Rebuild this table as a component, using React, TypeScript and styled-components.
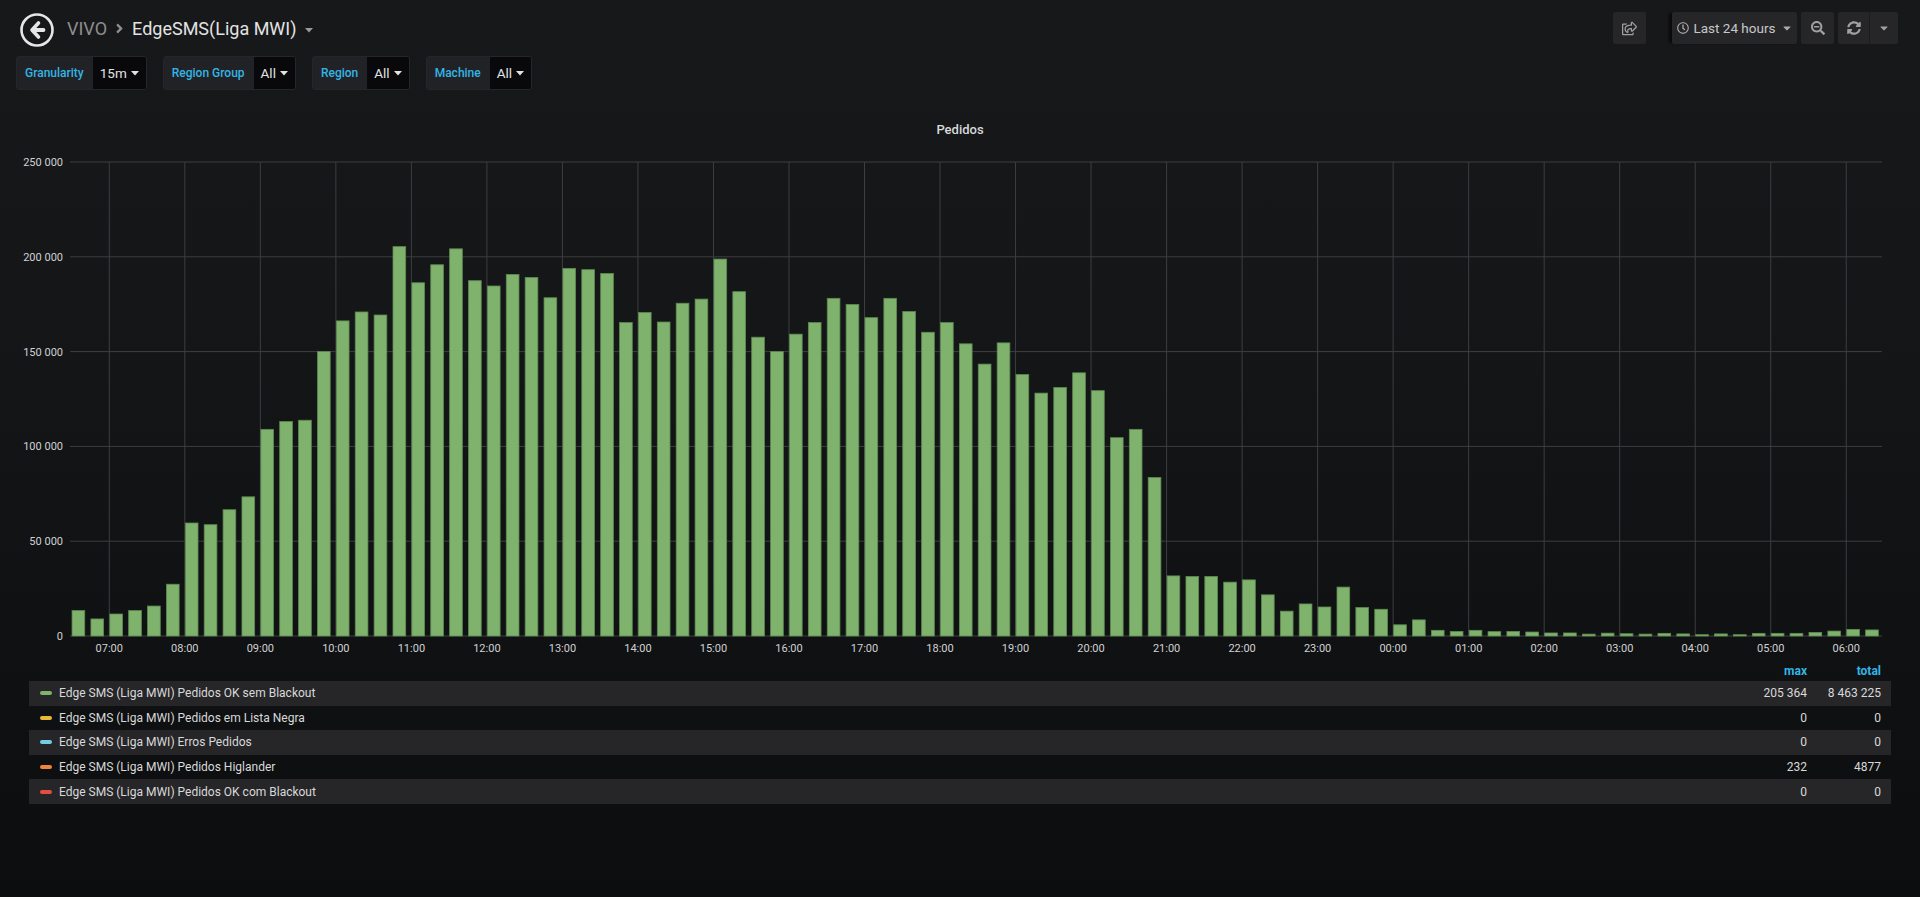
import React from "react";
import styled, { createGlobalStyle } from "styled-components";
import {
  FaRegShareSquare,
  FaRegClock,
  FaSearchMinus,
  FaSyncAlt,
  FaCaretDown,
  FaAngleRight,
} from "react-icons/fa";

const GlobalStyle = createGlobalStyle`
  html, body {
    margin: 0;
    padding: 0;
  }
  body {
    background: linear-gradient(180deg, #17181a 0%, #151618 35%, #0c0d0f 100%);
    min-height: 897px;
    font-family: Roboto, "Liberation Sans", Arial, sans-serif;
    color: #d8d9da;
  }
`;

const Page = styled.div`
  width: 1920px;
  height: 897px;
  overflow: hidden;
`;

const Navbar = styled.div`
  display: flex;
  align-items: center;
  height: 56px;
  padding: 0 22px 0 20px;
  box-sizing: border-box;
`;

const BackButton = styled.div`
  width: 34px;
  height: 34px;
  margin: 4px 13px 0 0;
  display: flex;
`;

const Crumb = styled.span`
  font-size: 18px;
  color: #8e8e8e;
`;

const Chevron = styled.span`
  display: flex;
  color: #8e8e8e;
  margin: 1px 5px 0 5px;
`;

const Title = styled.span`
  font-size: 18px;
  color: #e3e3e3;
`;

const TitleCaret = styled.span`
  display: flex;
  color: #9a9a9a;
  margin-left: 8px;
  margin-top: 4px;
`;

const Spacer = styled.div`
  flex: 1;
`;

const NavButtons = styled.div`
  display: flex;
  align-items: center;
  gap: 4px;
`;

interface BtnProps {
  $w: number;
}

const NavBtn = styled.div<BtnProps>`
  width: ${({ $w }) => $w}px;
  height: 32px;
  background: #262628;
  border-radius: 2px;
  display: flex;
  align-items: center;
  justify-content: center;
  color: #9fa0a1;
  font-size: 15px;
  box-sizing: border-box;
`;

const ShareBtn = styled(NavBtn)`
  margin-right: 22px;
`;

const TimeBtn = styled(NavBtn)`
  gap: 5px;
  color: #c7c8c9;
  font-size: 13.5px;
  box-shadow: -4px 0 3px -1px rgba(0, 0, 0, 0.6);
  & svg {
    color: #a9aaab;
  }
`;

const BtnGroup = styled.div`
  display: flex;
  background: #262628;
  border-radius: 2px;
`;

const GroupPart = styled.div<BtnProps>`
  width: ${({ $w }) => $w}px;
  height: 32px;
  display: flex;
  align-items: center;
  justify-content: center;
  color: #9fa0a1;
  font-size: 15px;
  & + & {
    border-left: 1px solid #1b1c1e;
  }
`;

const FilterRow = styled.div`
  display: flex;
  gap: 16px;
  padding-left: 16px;
`;

const Filter = styled.div`
  display: flex;
  height: 34px;
  border: 1px solid #252629;
  border-radius: 3px;
  overflow: hidden;
  box-sizing: border-box;
`;

const FilterLabel = styled.div`
  background: #212225;
  color: #33b5e5;
  font-size: 12px;
  font-weight: 500;
  padding: 0 9px 0 8px;
  display: flex;
  align-items: center;
`;

const FilterValue = styled.div`
  background: #09090b;
  color: #e3e3e3;
  font-size: 13.5px;
  padding: 0 7px 0 7px;
  display: flex;
  align-items: center;
  gap: 4px;
`;

const Panel = styled.div`
  margin-top: 29px;
  padding: 0 15px;
`;

const PanelTitle = styled.div`
  height: 22px;
  line-height: 22px;
  text-align: center;
  font-size: 13px;
  font-weight: 500;
  color: #d8d9da;
`;

const ChartSvg = styled.svg`
  display: block;
  margin-top: 10px;
  font-family: Roboto, "Liberation Sans", Arial, sans-serif;
`;

const Legend = styled.div`
  margin: 0 14px;
  font-size: 12px;
`;

const LegendHead = styled.div`
  display: flex;
  height: 20px;
  align-items: center;
  color: #33b5e5;
  font-weight: 700;
`;

interface RowProps {
  $odd: boolean;
}

const LegendRow = styled.div<RowProps>`
  display: flex;
  align-items: center;
  height: 24.6px;
  background: ${({ $odd }) => ($odd ? "#262628" : "transparent")};
  color: #d8d9da;
`;

const NameCell = styled.div`
  flex: 1;
  display: flex;
  align-items: center;
  padding-left: 11px;
`;

const Swatch = styled.span<{ $color: string }>`
  width: 12px;
  height: 4px;
  border-radius: 2px;
  background: ${({ $color }) => $color};
  margin-right: 7px;
`;

const MaxCell = styled.div`
  width: 80px;
  text-align: right;
`;

const TotalCell = styled.div`
  width: 74px;
  padding-right: 10px;
  text-align: right;
`;

const values = [
  13400, 9000, 11600, 13400, 15800, 27300, 59600, 58700, 66600, 73400, 109000,
  113100, 113800, 150000, 166200, 170900, 169300, 205364, 186300, 195800,
  204200, 187400, 184600, 190700, 189100, 178400, 193900, 193200, 191200,
  165300, 170600, 165600, 175500, 177700, 198800, 181600, 157600, 150000,
  159200, 165300, 178100, 174900, 167900, 178100, 171100, 160200, 165300,
  154100, 143400, 154600, 137900, 128100, 131100, 138800, 129400, 104600,
  109000, 83600, 31700, 31400, 31400, 28400, 29600, 21700, 13100, 16900, 15300,
  25800, 15000, 14100, 5900, 8500, 3000, 2400, 3000, 2300, 2400, 2100, 1600,
  1600, 1000, 1500, 1200, 1000, 1400, 1100, 700, 1100, 700, 1400, 1400, 1400,
  1900, 2600, 3500, 3200,
];

const series = [
  { name: "Edge SMS (Liga MWI) Pedidos OK sem Blackout", color: "#7eb26d", max: "205 364", total: "8 463 225" },
  { name: "Edge SMS (Liga MWI) Pedidos em Lista Negra", color: "#eab839", max: "0", total: "0" },
  { name: "Edge SMS (Liga MWI) Erros Pedidos", color: "#6ed0e0", max: "0", total: "0" },
  { name: "Edge SMS (Liga MWI) Pedidos Higlander", color: "#ef843c", max: "232", total: "4877" },
  { name: "Edge SMS (Liga MWI) Pedidos OK com Blackout", color: "#e24d42", max: "0", total: "0" },
];

const W = 1890;
const H = 510;
const LEFT = 55;
const RIGHT = 1867;
const TOP = 11;
const BOTTOM = 485;
const HOUR0 = 94.3; // x of 07:00
const HOUR_W = 75.52;
const BAR_P = HOUR_W / 4;
const BAR_W = 12.7;

const yFor = (v: number) => BOTTOM - (v / 250000) * (BOTTOM - TOP);

function Chart() {
  const hours = Array.from({ length: 24 }, (_, i) => i);
  const ticks = [0, 50000, 100000, 150000, 200000, 250000];
  const fmt = (v: number) =>
    v === 0 ? "0" : `${Math.round(v / 1000)} 000`;
  return (
    <ChartSvg width={W} height={H}>
      {ticks.map((t) => (
        <g key={t}>
          <line x1={LEFT} x2={RIGHT} y1={yFor(t)} y2={yFor(t)} stroke="#3d3e40" strokeWidth={1} />
          <text x={48} y={yFor(t) + 4} textAnchor="end" fontSize={11} fill="#d0d1d2">
            {fmt(t)}
          </text>
        </g>
      ))}
      {hours.map((h) => {
        const x = HOUR0 + h * HOUR_W;
        const label = `${String((7 + h) % 24).padStart(2, "0")}:00`;
        return (
          <g key={h}>
            <line x1={x} x2={x} y1={TOP} y2={BOTTOM} stroke="#3d3e40" strokeWidth={1} />
            <text x={x} y={501} textAnchor="middle" fontSize={11} fill="#d0d1d2">
              {label}
            </text>
          </g>
        );
      })}
      {values.map((v, i) => {
        const x = HOUR0 + (i - 2) * BAR_P;
        const y = yFor(v);
        return (
          <rect
            key={i}
            x={x + 0.5}
            y={y}
            width={BAR_W}
            height={BOTTOM - y}
            fill="#7eb26d"
            stroke="#5e8a50"
            strokeWidth={0.8}
          />
        );
      })}
    </ChartSvg>
  );
}

function BackIcon() {
  return (
    <svg width="34" height="34" viewBox="0 0 34 34">
      <circle cx="17" cy="17" r="15.5" fill="none" stroke="#e6e6e6" strokeWidth="2.6" />
      <path d="M18.5 10 L12 17 L18.5 24" fill="none" stroke="#e6e6e6" strokeWidth="3.6" strokeLinecap="round" strokeLinejoin="round" />
      <path d="M13 17 H23.5" fill="none" stroke="#e6e6e6" strokeWidth="3.8" strokeLinecap="round" />
    </svg>
  );
}

function CaretIcon() {
  return (
    <svg width="8" height="5" viewBox="0 0 8 5">
      <path d="M0 0 H8 L4 4.5 Z" fill="currentColor" />
    </svg>
  );
}

export default function App() {
  return (
    <Page>
      <GlobalStyle />
      <Navbar>
        <BackButton>
          <BackIcon />
        </BackButton>
        <Crumb>VIVO</Crumb>
        <Chevron>
          <FaAngleRight size={15} />
        </Chevron>
        <Title>EdgeSMS(Liga MWI)</Title>
        <TitleCaret>
          <CaretIcon />
        </TitleCaret>
        <Spacer />
        <NavButtons>
          <ShareBtn $w={33}>
            <FaRegShareSquare />
          </ShareBtn>
          <TimeBtn $w={125}>
            <FaRegClock size={12} />
            <span>Last 24 hours</span>
            <FaCaretDown size={12} />
          </TimeBtn>
          <NavBtn $w={33}>
            <FaSearchMinus size={14} />
          </NavBtn>
          <BtnGroup>
            <GroupPart $w={31}>
              <FaSyncAlt size={14} />
            </GroupPart>
            <GroupPart $w={28}>
              <FaCaretDown size={12} />
            </GroupPart>
          </BtnGroup>
        </NavButtons>
      </Navbar>

      <FilterRow>
        {[
          ["Granularity", "15m"],
          ["Region Group", "All"],
          ["Region", "All"],
          ["Machine", "All"],
        ].map(([label, value]) => (
          <Filter key={label}>
            <FilterLabel>{label}</FilterLabel>
            <FilterValue>
              {value}
              <CaretIcon />
            </FilterValue>
          </Filter>
        ))}
      </FilterRow>

      <Panel>
        <PanelTitle>Pedidos</PanelTitle>
        <Chart />
        <Legend>
          <LegendHead>
            <NameCell />
            <MaxCell>max</MaxCell>
            <TotalCell>total</TotalCell>
          </LegendHead>
          {series.map((s, i) => (
            <LegendRow key={s.name} $odd={i % 2 === 0}>
              <NameCell>
                <Swatch $color={s.color} />
                {s.name}
              </NameCell>
              <MaxCell>{s.max}</MaxCell>
              <TotalCell>{s.total}</TotalCell>
            </LegendRow>
          ))}
        </Legend>
      </Panel>
    </Page>
  );
}
